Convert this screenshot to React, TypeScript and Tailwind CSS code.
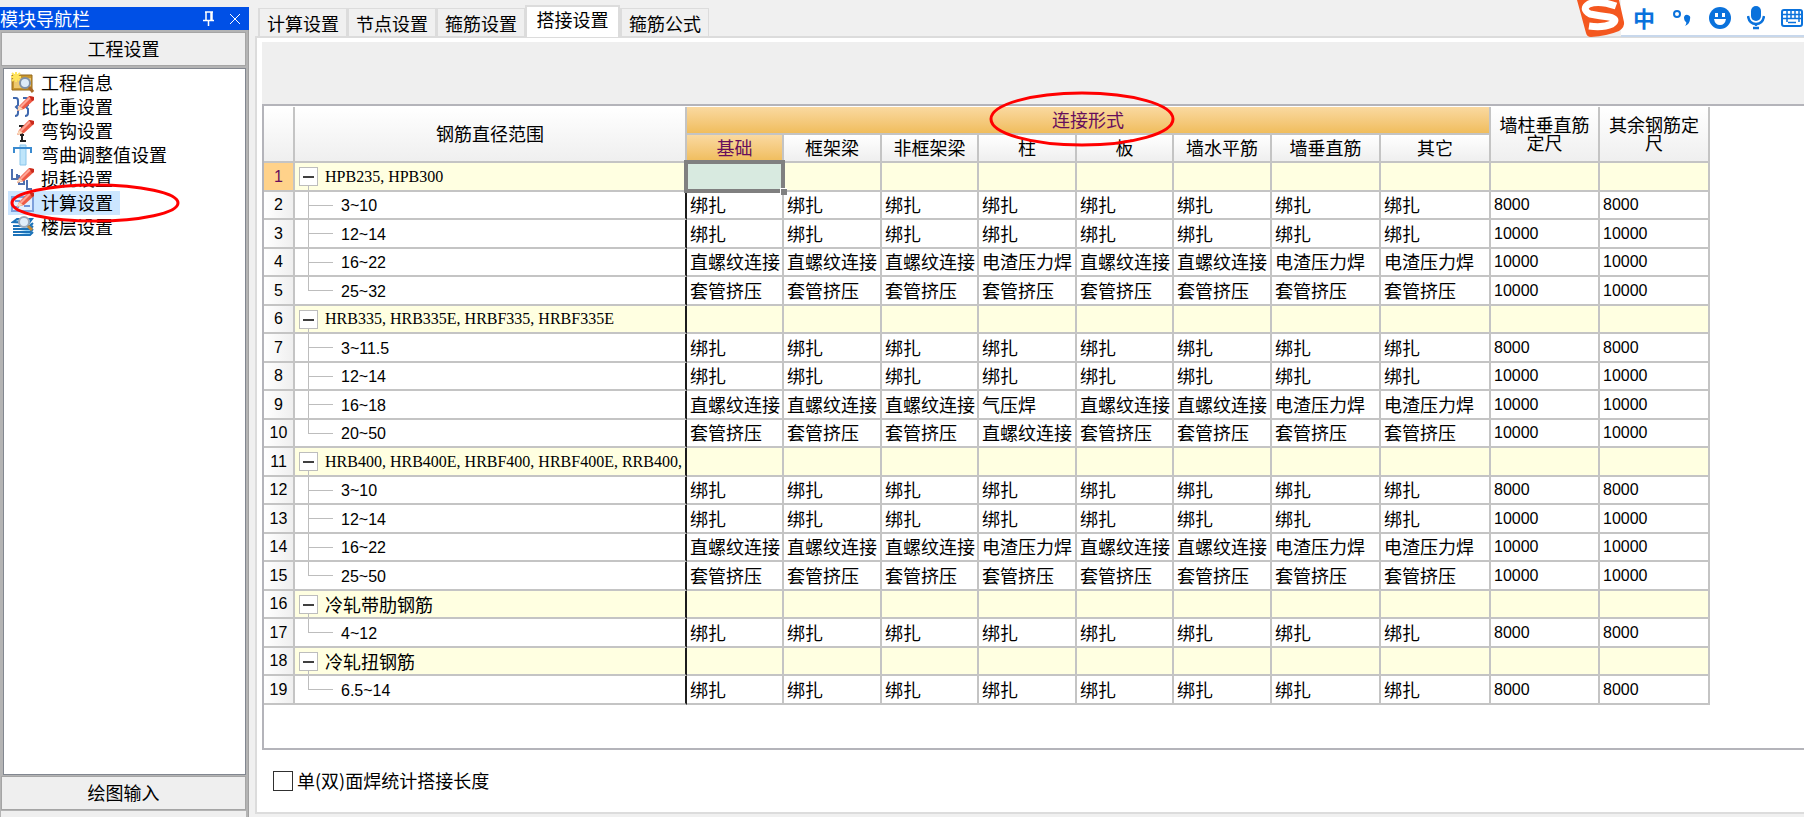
import React, { useState } from 'react';

// ======================================================
// DATA
// ======================================================

type Row = { name: string; group?: boolean; last?: boolean; cells?: string[] };

const BZ = '绑扎';
const ZLW = '直螺纹连接';
const DZ = '电渣压力焊';
const TG = '套管挤压';
const QY = '气压焊';

const all = (v: string, len: string) => [v, v, v, v, v, v, v, v, len, len];
const mixed = (col: string) => [ZLW, ZLW, ZLW, col, ZLW, ZLW, DZ, DZ, '10000', '10000'];

const rows: Row[] = [
  { name: 'HPB235, HPB300', group: true },
  { name: '3~10', cells: all(BZ, '8000') },
  { name: '12~14', cells: all(BZ, '10000') },
  { name: '16~22', cells: mixed(DZ) },
  { name: '25~32', last: true, cells: all(TG, '10000') },
  { name: 'HRB335, HRB335E, HRBF335, HRBF335E', group: true },
  { name: '3~11.5', cells: all(BZ, '8000') },
  { name: '12~14', cells: all(BZ, '10000') },
  { name: '16~18', cells: mixed(QY) },
  { name: '20~50', last: true, cells: [TG, TG, TG, ZLW, TG, TG, TG, TG, '10000', '10000'] },
  { name: 'HRB400, HRB400E, HRBF400, HRBF400E, RRB400,', group: true },
  { name: '3~10', cells: all(BZ, '8000') },
  { name: '12~14', cells: all(BZ, '10000') },
  { name: '16~22', cells: mixed(DZ) },
  { name: '25~50', last: true, cells: all(TG, '10000') },
  { name: '冷轧带肋钢筋', group: true },
  { name: '4~12', last: true, cells: all(BZ, '8000') },
  { name: '冷轧扭钢筋', group: true },
  { name: '6.5~14', last: true, cells: all(BZ, '8000') },
];

const columns = ['基础', '框架梁', '非框架梁', '柱', '板', '墙水平筋', '墙垂直筋', '其它'];
const tabs = ['计算设置', '节点设置', '箍筋设置', '搭接设置', '箍筋公式'];

// ======================================================
// ICONS
// ======================================================

const Pencil = () => (
  <g>
    <path d="M6 15 L8 10 L18 0 L23 1 L23 4 L13 13 Z" fill="#ee5a45" />
    <path d="M9 10 L18 1 L20 2 L10 12 Z" fill="#ffa596" />
    <path d="M6 15 L8 10 L12 13 Z" fill="#f8d9b8" />
    <path d="M18 0 L23 1 L23 4 L21 5 Z" fill="#c8291c" />
  </g>
);

const icons: React.ReactNode[] = [
  <>
    <path d="M1 3h20v15H1z" fill="#c9972f" stroke="#94681c" />
    <path d="M3 6h17v10H3z" fill="#edc870" />
    <path d="M5 0v10M0 5h10M1 1l8 8M9 1L1 9" stroke="#ffe45c" strokeWidth="2" />
    <circle cx="14" cy="11" r="5" fill="#dcebfa" stroke="#7f91a8" strokeWidth="2" />
    <path d="M18 15l4 5" stroke="#a86a28" strokeWidth="3" />
  </>,
  <>
    <path d="M2 2h3q2 0 2 3v4l-2 2l2 2v4q0 3-3 3M12 2h3q2 0 2 3v4l-2 2l2 2v4q0 3-3 3" fill="none" stroke="#3f68ae" strokeWidth="2" />
    <Pencil />
  </>,
  <>
    <path d="M8 6h5M11 6v15M9 21h6M9 15h4" stroke="#222" strokeWidth="2" />
    <Pencil />
  </>,
  <>
    <path d="M9 1h6v20H9z" fill="#bfe5fa" stroke="#8bc6eb" />
    <path d="M3 9V4h17v5" fill="none" stroke="#3b8bd0" strokeWidth="2" />
  </>,
  <>
    <path d="M1 1v10h5V6M8 7v9h5v-6M16 12v9h5" fill="none" stroke="#4d6faf" strokeWidth="2" />
    <Pencil />
  </>,
  <>
    <path d="M1 5h21v14H1z" fill="#e2efff" stroke="#7d9fdb" strokeWidth="2" />
    <path d="M4 9h5M4 15h4M13 14h6" stroke="#6f93d6" strokeWidth="2" />
    <Pencil />
  </>,
  <>
    <path d="M2 6l4-3h15l-3 4zM2 10h17l3-3M2 13h17l3-3M2 16h17l3-3M2 19h17l3-3" fill="#8ccdf2" stroke="#1c72b8" strokeWidth="2" />
    <circle cx="13" cy="6" r="5" fill="#e0eefa" stroke="#9aa9bb" strokeWidth="2" />
    <path d="M17 10l4 4" stroke="#c48a38" strokeWidth="3" />
  </>,
];

const navItems = ['工程信息', '比重设置', '弯钩设置', '弯曲调整值设置', '损耗设置', '计算设置', '楼层设置'];

// ======================================================
// SIDEBAR
// ======================================================

const Sidebar = () => (
  <aside className="flex w-[249px] shrink-0 flex-col pt-[7px]">
    <div className="flex h-[23px] items-center bg-[#0050e6] pr-2 text-white">
      <h2 className="flex-1 pb-0.5 leading-6">模块导航栏</h2>
      <button aria-label="固定" className="mr-[14px]">
        <svg width="12" height="16" viewBox="0 0 12 16" fill="none" stroke="#fff">
          <path d="M2 1h8M3 1v8M9 1v8M8 1v8M0 9.500h11M5.500 10v5" strokeWidth="1.500" />
        </svg>
      </button>
      <button aria-label="关闭">
        <svg width="12" height="12" viewBox="0 0 12 12" stroke="#fff">
          <path d="M1 1l10 10M11 1L1 11" />
        </svg>
      </button>
    </div>
    <div className="flex flex-1 flex-col border-r border-[#a0a0a0] bg-[#b4b4b4] pt-0.5 pr-0.5 pl-px">
      <button className="h-[34px] border border-[#a5a5a5] bg-[#efefef] pb-0.5">工程设置</button>
      <ul className="mt-0.5 ml-0.5 flex-1 border border-[#828790] bg-white pt-0.5 pl-1">
        {navItems.map((item, i) => (
          <li key={item} className="relative">
            <a href="#" className={`flex h-6 w-fit items-center pr-[7px] pl-[3px] ${i === 5 ? 'bg-[#cce6ff]' : ''}`}>
              <svg width="24" height="22" viewBox="0 0 24 22" className="mr-1.5">{icons[i]}</svg>
              <span className="pb-0.5 leading-[22px]">{item}</span>
            </a>
            {i === 5 && (
              <svg className="pointer-events-none absolute -top-[8px] left-px z-10" width="172" height="40" viewBox="0 0 172 40">
                <ellipse cx="86" cy="20" rx="83" ry="18" fill="none" stroke="#f00" strokeWidth="3" />
              </svg>
            )}
          </li>
        ))}
      </ul>
      <button className="mt-px h-[34px] border border-[#a5a5a5] bg-[#efefef] pb-0.5">绘图输入</button>
      <div className="mt-px h-[6px] bg-[#efefef]" />
    </div>
  </aside>
);

// ======================================================
// INPUT METHOD BAR
// ======================================================

const ImeBar = () => (
  <div className="absolute top-0 right-0 flex h-[37px] items-start">
    <svg width="50" height="38" viewBox="0 0 50 38" className="z-10 -mr-[6px]">
      <path d="M0 0H42L47 22Q48 27 42 31Q30 36 14 37Q10 37 9 33Z" fill="#f4571f" />
      <path d="M39 6Q22 0 12 4Q4 9 13 14Q23 16 32 17Q42 19 35 24Q26 28 12 26" fill="none" stroke="#fff" strokeWidth="7" />
    </svg>
    <div className="flex h-[37px] items-center gap-4 border-b-2 border-[#c8d8ec] bg-white pr-px pl-[12px]">
      <button className="w-[22px] pb-0.5 text-[22px] leading-[22px] font-bold text-[#0a72dc]">中</button>
      <button aria-label="标点">
        <svg width="22" height="22" viewBox="0 0 22 22">
          <circle cx="6" cy="7" r="3" fill="none" stroke="#0a72dc" strokeWidth="2" />
          <path d="M13 10a3 3 0 1 1 6 2q0 5-5 7q2-3 1-4q-2-1-2-5z" fill="#0a72dc" />
        </svg>
      </button>
      <button aria-label="表情">
        <svg width="22" height="22" viewBox="0 0 22 22">
          <circle cx="11" cy="11" r="11" fill="#0a72dc" />
          <path d="M6 6h3v4H6zM13 6h3v4h-3zM5 12h12q-1 6-6 6t-6-6z" fill="#fff" />
        </svg>
      </button>
      <button aria-label="语音">
        <svg width="18" height="24" viewBox="0 0 18 24">
          <rect x="4" width="10" height="15" rx="5" fill="#0a72dc" />
          <path d="M1 10q1 8 8 8t8-8M9 18v2M6 22h6" fill="none" stroke="#0a72dc" strokeWidth="2.500" />
        </svg>
      </button>
      <button aria-label="键盘">
        <svg width="22" height="18" viewBox="0 0 22 18">
          <rect x="1" y="1" width="20" height="16" rx="2" fill="#fff" stroke="#0a72dc" strokeWidth="2" />
          <path d="M2 5.500h18M2 9.500h18M6 2v11M10 2v8M14 2v8M18 2v11M7 13.500h8" stroke="#0a72dc" strokeWidth="1.500" />
        </svg>
      </button>
    </div>
  </div>
);

// ======================================================
// TABLE
// ======================================================

const headCell = 'border-r-2 border-b-2 border-[#c4c4c4] bg-linear-to-b from-white to-[#efefef] p-0 pb-0.5 font-normal';
const activeHead = 'border-r-2 border-b-2 border-[#c4c4c4] bg-linear-to-b from-[#fad9a0] to-[#f0bd5c] p-0 pb-0.5 font-normal text-[#660e5c]';

const TreeCell = ({ row }: { row: Row }) => {
  if (row.group) {
    return (
      <div className="flex h-full items-center pl-1">
        <button aria-label="折叠" className="flex h-full flex-col items-center">
          <span className="h-1 shrink-0" />
          <span className="flex h-[19px] w-[19px] shrink-0 items-center justify-center border border-[#bdbdbd] bg-white">
            <span className="h-0.5 w-[11px] bg-[#404040]" />
          </span>
          <span className="w-px flex-1 bg-[#bdbdbd]" />
        </button>
        <span className={`ml-[7px] whitespace-nowrap ${row.name.startsWith('冷') ? '' : "font-['Liberation_Serif',serif] text-base"}`}>{row.name}</span>
      </div>
    );
  }
  return (
    <div className="flex h-full items-center pl-[13px]">
      <span className="flex h-full w-[25px] flex-col">
        <span className="h-[14px] w-full border-b border-l border-[#bdbdbd]" />
        <span className={`w-px flex-1 ${row.last ? '' : 'bg-[#bdbdbd]'}`} />
      </span>
      <span className="ml-2 pt-0.5 font-['Liberation_Sans',sans-serif] text-base">{row.name}</span>
    </div>
  );
};

const SettingsTable = () => (
  <table className="w-[1446px] table-fixed border-separate border-spacing-0">
    <colgroup>
      <col className="w-[31px]" />
      <col className="w-[392px]" />
      <col className="w-[97px]" />
      <col className="w-[98px]" />
      <col className="w-[97px]" />
      <col className="w-[98px]" />
      <col className="w-[97px]" />
      <col className="w-[98px]" />
      <col className="w-[109px]" />
      <col className="w-[110px]" />
      <col className="w-[109px]" />
      <col className="w-[110px]" />
    </colgroup>
    <thead>
      <tr className="h-7">
        <th rowSpan={2} className={headCell} aria-label="行号" />
        <th rowSpan={2} className={headCell}>钢筋直径范围</th>
        <th colSpan={8} className={activeHead}>
          <div className="relative leading-6">
            连接形式
            <svg className="pointer-events-none absolute -top-[16px] left-[302px] z-10" width="186" height="56" viewBox="0 0 186 56">
              <ellipse cx="93" cy="28" rx="91" ry="26" fill="none" stroke="#f00" strokeWidth="3" />
            </svg>
          </div>
        </th>
        <th rowSpan={2} className={`${headCell} px-1 leading-[18px]`}>墙柱垂直筋定尺</th>
        <th rowSpan={2} className={`${headCell} px-1 leading-[18px]`}>其余钢筋定尺</th>
      </tr>
      <tr className="h-7">
        {columns.map((c, i) => (
          <th key={c} className={`${i === 0 ? activeHead : headCell} leading-6`}>{c}</th>
        ))}
      </tr>
    </thead>
    <tbody>
      {rows.map((row, r) => (
        <tr key={r} className={`odd:h-[29px] even:h-[28px] ${row.group ? 'bg-[#ffffe1]' : 'bg-white'}`}>
          <th
            scope="row"
            className={`border-r-2 border-b-2 border-[#c4c4c4] p-0 font-['Liberation_Sans',sans-serif] text-base leading-5 font-normal ${
              r === 0 ? 'bg-[#ffd28a] text-[#660e5c]' : 'bg-linear-to-r from-white to-[#efefef]'
            }`}
          >
            {r + 1}
          </th>
          <td className="h-px border-r-2 border-b-2 border-r-[#1c1c1c] border-b-[#c4c4c4] p-0 leading-5">
            <TreeCell row={row} />
          </td>
          {Array.from({ length: 10 }).map((_, c) => (
            <td
              key={c}
              className={`relative border-r-2 border-b-2 border-[#c4c4c4] p-0 pl-[3px] leading-5 whitespace-nowrap ${
                c > 7 ? "font-['Liberation_Sans',sans-serif] text-base" : 'pb-0.5'
              }`}
            >
              {row.cells?.[c]}
              {r === 0 && c === 0 && (
                <>
                  <div className="absolute -top-[3px] -right-[3px] -bottom-[3px] -left-[3px] z-10 border-4 border-[#808080] bg-[#d8eae0]" />
                  <div className="absolute -right-[5px] -bottom-[5px] z-10 h-[7px] w-[7px] border-t border-l border-white bg-[#808080]" />
                </>
              )}
            </td>
          ))}
        </tr>
      ))}
    </tbody>
  </table>
);

// ======================================================
// PAGE
// ======================================================

const App: React.FC = () => {
  const [checked, setChecked] = useState(false);

  return (
    <div className="relative flex min-h-screen overflow-hidden bg-[#f0f0f0] font-['Noto_Sans_CJK_SC',sans-serif] text-[18px] text-black">
      <Sidebar />
      <main className="ml-[6px] flex min-w-0 flex-1 flex-col pt-[5px]">
        <div role="tablist" className="-mb-px flex h-8 items-end pl-[3px]">
          {tabs.map((t, i) => (
            <button
              key={t}
              role="tab"
              aria-selected={i === 3}
              className={
                i === 3
                  ? 'z-10 h-8 w-[95px] border-2 border-b-0 border-[#dcdcdc] bg-white pb-1.5 leading-6'
                  : 'mb-px h-7 border border-l-2 border-b-0 border-[#dcdcdc] bg-[#f0f0f0] px-[7px] leading-6'
              }
            >
              {t}
            </button>
          ))}
        </div>
        <div className="mb-[3px] flex flex-1 flex-col border-2 border-r-0 border-[#dcdcdc] bg-white pt-1 pl-[5px]">
          <div className="h-[62px] bg-[#efefef]" />
          <div className="border-2 border-r-0 border-[#b4b4ba] bg-white pt-px pb-[43px]">
            <SettingsTable />
          </div>
          <label className="flex w-fit flex-1 items-center gap-1 pl-[11px]">
            <input
              type="checkbox"
              checked={checked}
              onChange={(e) => setChecked(e.target.checked)}
              className="h-5 w-5 appearance-none border border-[#303030] bg-white checked:bg-[#404040]"
            />
            <span className="pb-0.5 leading-6">单(双)面焊统计搭接长度</span>
          </label>
        </div>
      </main>
      <ImeBar />
    </div>
  );
};

export default App;
